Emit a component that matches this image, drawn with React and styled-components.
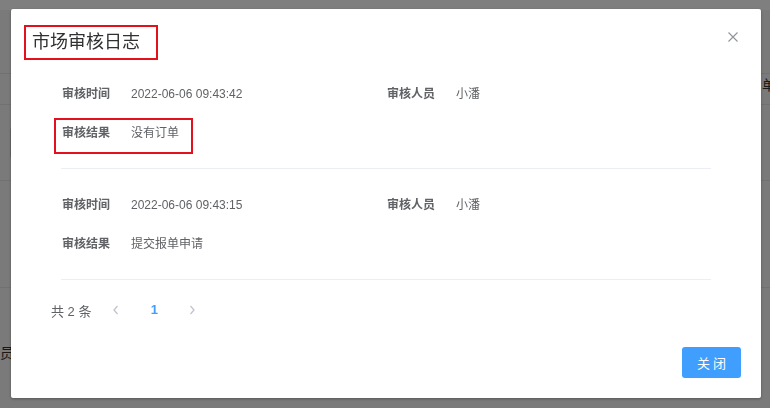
import React from "react";
import styled, { createGlobalStyle, css } from "styled-components";

const GlobalStyle = createGlobalStyle`
  html, body {
    margin: 0;
    padding: 0;
    width: 770px;
    height: 408px;
    overflow: hidden;
    font-family: "Liberation Sans", "Noto Sans CJK SC", sans-serif;
  }
`;

const redMark = css`
  position: relative;
  &::after {
    content: "";
    position: absolute;
    border: 2px solid #e3111b;
    box-sizing: border-box;
    pointer-events: none;
  }
`;

// page underneath the dialog
const Page = styled.div`
  width: 770px;
  height: 408px;
  background: #f4f4f4;
  display: flex;
  flex-direction: column;
  color: #303133;
  font-size: 14px;
`;

const PageTop = styled.div`
  height: 10px;
  background: #ffffff;
`;

const PageRow = styled.div`
  height: ${(p) => p.$h}px;
  border-bottom: ${(p) => (p.$line ? "1px solid #e2e2e2" : "none")};
  display: flex;
  align-items: ${(p) => p.$align || "center"};
  box-sizing: border-box;
  overflow: hidden;
`;

const PageText = styled.span`
  margin: ${(p) => p.$m || "0"};
  line-height: 16px;
  white-space: nowrap;
`;

const PageInput = styled.div`
  width: 120px;
  height: 32px;
  margin-left: 10px;
  border: 1px solid #cfcfcf;
  border-radius: 4px;
  background: #fff;
`;

const Overlay = styled.div`
  position: fixed;
  inset: 0;
  background: rgba(0, 0, 0, 0.5);
  display: flex;
  justify-content: center;
  align-items: flex-start;
  padding-top: 9px;
`;

const Dialog = styled.div`
  position: relative;
  width: 750px;
  margin-left: 2px;
  background: #fff;
  border-radius: 2px;
  box-shadow: 0 1px 3px rgba(0, 0, 0, 0.3);
  box-sizing: border-box;
  display: flex;
  flex-direction: column;
`;

const Header = styled.div`
  padding: 21px 20px 4px 21px;
  display: flex;
`;

const Title = styled.span`
  font-size: 18px;
  line-height: 24px;
  color: #303133;
  ${redMark}
  &::after {
    left: -8px;
    top: -5px;
    width: 134px;
    height: 35px;
  }
`;

const CloseBtn = styled.button`
  position: absolute;
  top: 23px;
  right: 23px;
  width: 10px;
  height: 10px;
  padding: 0;
  border: none;
  background: none;
  cursor: pointer;
  display: flex;
`;

const Group = styled.div`
  margin: 0 50px;
  padding: 26px 0 25px;
  border-bottom: 1px solid #ebeef5;
  display: grid;
  grid-template-columns: 325px 325px;
  row-gap: 19px;
`;

const Item = styled.div`
  display: flex;
  font-size: 12px;
  line-height: 20px;
  grid-column: ${(p) => (p.$full ? "1 / span 2" : "auto")};
  ${(p) =>
    p.$marked &&
    css`
      ${redMark}
      &::after {
        left: -7px;
        top: -5px;
        width: 139px;
        height: 36px;
      }
    `}
`;

const Label = styled.span`
  width: 70px;
  padding-left: 1px;
  box-sizing: border-box;
  color: #606266;
  font-weight: 700;
`;

const Value = styled.span`
  color: #606266;
`;

const Pagination = styled.div`
  margin-top: 16px;
  padding-left: 40px;
  display: flex;
  align-items: center;
  height: 28px;
  font-size: 13px;
  color: #606266;
`;

const Total = styled.span`
  margin-right: 10px;
`;

const PageBtn = styled.button`
  width: 30px;
  height: 28px;
  padding: 0;
  border: none;
  background: none;
  display: flex;
  align-items: center;
  justify-content: center;
  color: #c0c4cc;
  cursor: not-allowed;
`;

const PageNum = styled.span`
  width: 36px;
  margin: 0 5px;
  text-align: center;
  color: ${(p) => (p.$active ? "#409eff" : "#606266")};
  font-weight: 700;
  line-height: 28px;
`;

const Footer = styled.div`
  display: flex;
  justify-content: flex-end;
  padding: 23px 20px 20px;
`;

const PrimaryButton = styled.button`
  height: 31px;
  padding: 0 12px 0 15px;
  border: none;
  border-radius: 3px;
  background: #409eff;
  color: #fff;
  font-family: inherit;
  font-size: 13px;
  letter-spacing: 3px;
  cursor: pointer;
`;

const Chevron = ({ dir }) => (
  <svg width="8" height="10" viewBox="0 0 8 10">
    <path
      d={dir === "left" ? "M5.5 1 L2 5 L5.5 9" : "M2.5 1 L6 5 L2.5 9"}
      fill="none"
      stroke="currentColor"
      strokeWidth="1.3"
    />
  </svg>
);

const logs = [
  { time: "2022-06-06 09:43:42", user: "小潘", result: "没有订单", marked: true },
  { time: "2022-06-06 09:43:15", user: "小潘", result: "提交报单申请" },
];

export default function App() {
  return (
    <>
      <GlobalStyle />
      <Page>
        <PageTop />
        <PageRow $h={64} $line />
        <PageRow $h={31} $line $align="flex-start">
          <PageText $m="3px 0 0 762px">单</PageText>
        </PageRow>
        <PageRow $h={76} $line>
          <PageInput />
        </PageRow>
        <PageRow $h={107} $line />
        <PageRow $h={119} $align="flex-start">
          <PageText $m="57px 0 0 0">员</PageText>
        </PageRow>
      </Page>
      <Overlay>
        <Dialog>
          <Header>
            <Title>市场审核日志</Title>
          </Header>
          <CloseBtn aria-label="close">
            <svg width="10" height="10" viewBox="0 0 10 10">
              <path d="M0.5 0.5 L9.5 9.5 M9.5 0.5 L0.5 9.5" stroke="#909399" strokeWidth="1.1" />
            </svg>
          </CloseBtn>
          {logs.map((log) => (
            <Group key={log.time}>
              <Item>
                <Label>审核时间</Label>
                <Value>{log.time}</Value>
              </Item>
              <Item>
                <Label>审核人员</Label>
                <Value>{log.user}</Value>
              </Item>
              <Item $full $marked={log.marked}>
                <Label>审核结果</Label>
                <Value>{log.result}</Value>
              </Item>
            </Group>
          ))}
          <Pagination>
            <Total>共 2 条</Total>
            <PageBtn aria-label="prev">
              <Chevron dir="left" />
            </PageBtn>
            <PageNum $active>1</PageNum>
            <PageBtn aria-label="next">
              <Chevron dir="right" />
            </PageBtn>
          </Pagination>
          <Footer>
            <PrimaryButton>关闭</PrimaryButton>
          </Footer>
        </Dialog>
      </Overlay>
    </>
  );
}
